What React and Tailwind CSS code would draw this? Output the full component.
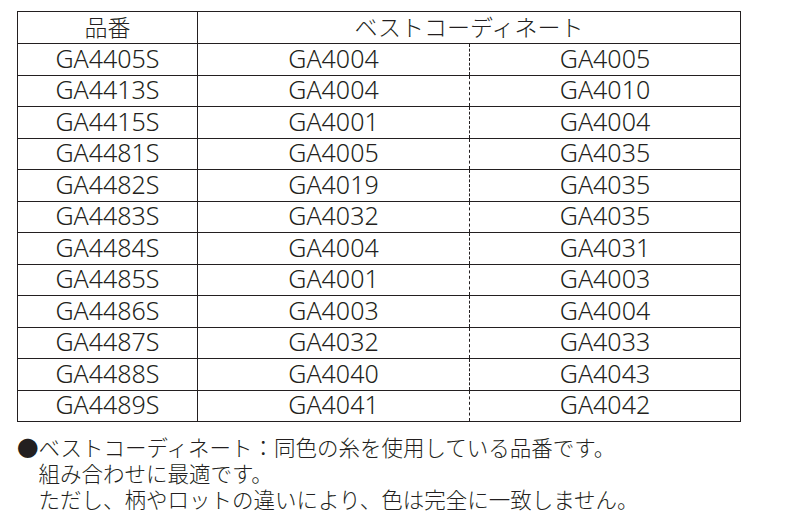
const rows = [
  ["GA4405S", "GA4004", "GA4005"],
  ["GA4413S", "GA4004", "GA4010"],
  ["GA4415S", "GA4001", "GA4004"],
  ["GA4481S", "GA4005", "GA4035"],
  ["GA4482S", "GA4019", "GA4035"],
  ["GA4483S", "GA4032", "GA4035"],
  ["GA4484S", "GA4004", "GA4031"],
  ["GA4485S", "GA4001", "GA4003"],
  ["GA4486S", "GA4003", "GA4004"],
  ["GA4487S", "GA4032", "GA4033"],
  ["GA4488S", "GA4040", "GA4043"],
  ["GA4489S", "GA4041", "GA4042"],
];

export default function App() {
  return (
    <div
      className="w-[800px] h-[522px] bg-white text-[#231f20] pt-[11px] pl-[17px] font-light"
      style={{ fontFamily: '"Noto Sans", "Noto Sans CJK JP", sans-serif' }}
    >
      <table className="w-[723px] border-collapse table-fixed text-[25px] leading-none">
        <colgroup>
          <col className="w-[180px]" />
          <col className="w-[272px]" />
          <col className="w-[271px]" />
        </colgroup>
        <thead>
          <tr className="h-[32px]">
            <th className="border border-[#231f20] font-light text-[23px] p-0 text-center">品番</th>
            <th colSpan={2} className="border border-[#231f20] font-light text-[23px] p-0 text-center">
              ベストコーディネート
            </th>
          </tr>
        </thead>
        <tbody>
          {rows.map((r) => (
            <tr key={r[0]} className="h-[31.5px]">
              <td className="border border-[#231f20] p-0 pb-[2px] text-center">{r[0]}</td>
              <td
                className="border border-[#231f20] p-0 pb-[2px] text-center"
                style={{ borderRightStyle: "dashed" }}
              >
                {r[1]}
              </td>
              <td className="border-y border-r border-[#231f20] p-0 pb-[2px] text-center">{r[2]}</td>
            </tr>
          ))}
        </tbody>
      </table>
      <div className="mt-[13px] text-[21.5px] leading-[26px]">
        <div>●ベストコーディネート：同色の糸を使用している品番です。</div>
        <div className="pl-[1em]">組み合わせに最適です。</div>
        <div className="pl-[1em]">ただし、柄やロットの違いにより、色は完全に一致しません。</div>
      </div>
    </div>
  );
}
